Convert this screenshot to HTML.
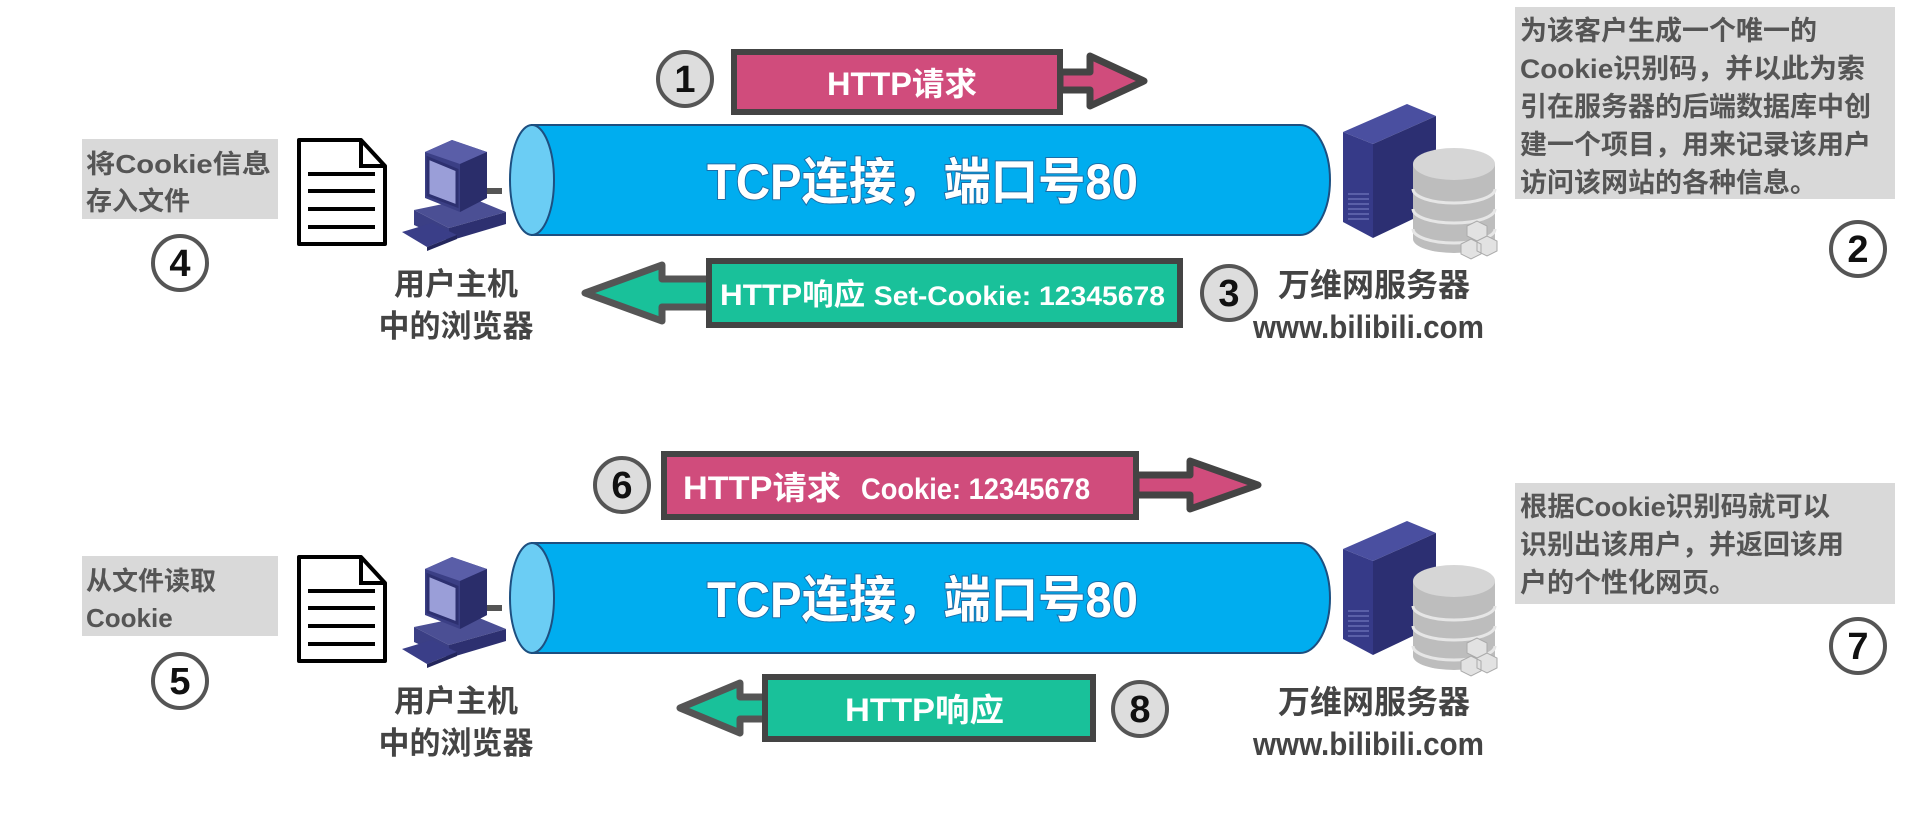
<!DOCTYPE html>
<html><head><meta charset="utf-8"><style>
html,body{margin:0;padding:0;background:#fff;}
svg{display:block}
text{font-family:"Liberation Sans","Noto Sans CJK SC",sans-serif;font-weight:bold;}
</style></head><body>
<svg width="1905" height="814" viewBox="0 0 1905 814" xmlns="http://www.w3.org/2000/svg">
<defs>
<g id="doc">
 <path d="M0 0 H62 L86 26 V104 H0 Z" fill="#fff" stroke="#000" stroke-width="4" stroke-linejoin="round"/>
 <path d="M62 0 V26 H86" fill="none" stroke="#000" stroke-width="4"/>
 <path d="M9 34H76M9 51H76M9 69H76M9 87H76" stroke="#000" stroke-width="4"/>
</g>
<g id="pc">
 <path d="M80 48 H100 V54 H80Z" fill="#555"/>
 <path d="M12 70 L70 58 L104 72 L47 88 Z" fill="#4b4f94"/>
 <path d="M47 88 L104 72 V84 L47 101 Z" fill="#2d3070"/>
 <path d="M12 70 L47 88 V101 L12 85Z" fill="#3b3f85"/>
 <path d="M0 92 L30 83 L55 95 L25 107Z" fill="#3a3e88"/>
 <path d="M25 107 L55 95 V99 L25 111Z" fill="#23265c"/>
 <path d="M23 12 L50 0 L85 12 V58 L58 72 L23 58Z" fill="#3b3f85"/>
 <path d="M23 12 L50 0 L85 12 L58 24Z" fill="#5a5ea8"/>
 <path d="M58 24 L85 12 V58 L58 72Z" fill="#2a2d6a"/>
 <path d="M26 18 L55 30 V66 L26 55Z" fill="#9a9ed8" stroke="#2d3070" stroke-width="3"/>
</g>
<g id="srv">
 <path d="M0 28 L64 0 L93 12 L30 40Z" fill="#4a4fa0"/>
 <path d="M0 28 L30 40 V134 L0 118Z" fill="#363a88"/>
 <path d="M30 40 L93 12 V104 L30 134Z" fill="#2c2f72"/>
 <path d="M5 90H26M5 95H26M5 100H26M5 105H26M5 110H26M5 115H26" stroke="#5a5fa8" stroke-width="2"/>
 <g transform="translate(70,40)">
  <path d="M0 20 V95 A41 14 0 0 0 82 95 V20Z" fill="#bdbdbd"/>
  <ellipse cx="41" cy="20" rx="41" ry="16" fill="#d6d6d6"/>
  <path d="M0 45 A41 14 0 0 0 82 45 M0 65 A41 14 0 0 0 82 65 M0 85 A41 14 0 0 0 82 85" fill="none" stroke="#e6e6e6" stroke-width="3"/>
  <path d="M54 82 l10-5 10 5v10l-10 5-10-5z M64 97 l10-5 10 5v10l-10 5-10-5z M48 100 l10-5 10 5v10l-10 5-10-5z" fill="#e2e2e2" stroke="#aaa"/>
 </g>
</g>
<g id="tube">
 <path d="M532 0 H1300 A30 55 0 0 1 1300 110 H532 Z" fill="#00adef" stroke="#1d4f80" stroke-width="2"/>
 <ellipse cx="532" cy="55" rx="22" ry="55" fill="#6bcdf4" stroke="#1d4f80" stroke-width="2"/>
 <text x="707" y="74" font-size="50" textLength="431" lengthAdjust="spacingAndGlyphs" fill="#fff" stroke="#1c6ea8" stroke-width="2" paint-order="stroke">TCP连接，端口号80</text>
</g>
</defs>

<!-- ===== TOP ===== -->
<use href="#tube" transform="translate(0,125)"/>
<rect x="82" y="139" width="196" height="80" fill="#d9d9d9"/>
<text x="86" y="173" font-size="26" fill="#555" textLength="185" lengthAdjust="spacingAndGlyphs">将Cookie信息</text>
<text x="86" y="210" font-size="26" fill="#555">存入文件</text>
<use href="#doc" transform="translate(299,140)"/>
<use href="#pc" transform="translate(402,140)"/>
<text x="456" y="295" font-size="31" fill="#444" text-anchor="middle">用户主机</text>
<text x="456" y="337" font-size="31" fill="#444" text-anchor="middle">中的浏览器</text>
<use href="#srv" transform="translate(1343,104)"/>
<text x="1374" y="296" font-size="32" fill="#444" text-anchor="middle">万维网服务器</text>
<text x="1253" y="338" font-size="32" fill="#444" textLength="231" lengthAdjust="spacingAndGlyphs" font-weight="normal">www.bilibili.com</text>
<rect x="1515" y="7" width="380" height="192" fill="#d9d9d9"/>
<g font-size="27" fill="#555">
<text x="1520" y="40">为该客户生成一个唯一的</text>
<text x="1520" y="78" textLength="345" lengthAdjust="spacingAndGlyphs">Cookie识别码，并以此为索</text>
<text x="1520" y="116">引在服务器的后端数据库中创</text>
<text x="1520" y="154">建一个项目，用来记录该用户</text>
<text x="1520" y="192">访问该网站的各种信息。</text>
</g>
<!-- request 1 -->
<path d="M1060 72 H1090 V56 L1144 81 L1090 106 V90 H1060Z" fill="#d04c7c" stroke="#444" stroke-width="7" stroke-linejoin="round"/>
<rect x="734" y="52" width="326" height="60" fill="#d04c7c" stroke="#444" stroke-width="6"/>
<text x="827" y="95" font-size="32" fill="#fff" textLength="150" lengthAdjust="spacingAndGlyphs">HTTP请求</text>
<!-- response 3 -->
<path d="M710 279 H662 V265 L585 293 L662 321 V307 H710Z" fill="#19c19a" stroke="#555" stroke-width="7" stroke-linejoin="round"/>
<rect x="709" y="261" width="471" height="64" fill="#19c19a" stroke="#444" stroke-width="6"/>
<text x="720" y="305" font-size="30" fill="#fff" textLength="445" lengthAdjust="spacingAndGlyphs">HTTP响应 <tspan font-size="27">Set-Cookie: 12345678</tspan></text>

<!-- ===== BOTTOM ===== -->
<use href="#tube" transform="translate(0,543)"/>
<rect x="82" y="556" width="196" height="80" fill="#d9d9d9"/>
<text x="86" y="590" font-size="26" fill="#555">从文件读取</text>
<text x="86" y="627" font-size="26" fill="#555">Cookie</text>
<use href="#doc" transform="translate(299,557)"/>
<use href="#pc" transform="translate(402,557)"/>
<text x="456" y="712" font-size="31" fill="#444" text-anchor="middle">用户主机</text>
<text x="456" y="754" font-size="31" fill="#444" text-anchor="middle">中的浏览器</text>
<use href="#srv" transform="translate(1343,521)"/>
<text x="1374" y="713" font-size="32" fill="#444" text-anchor="middle">万维网服务器</text>
<text x="1253" y="755" font-size="32" fill="#444" textLength="231" lengthAdjust="spacingAndGlyphs" font-weight="normal">www.bilibili.com</text>
<rect x="1515" y="483" width="380" height="121" fill="#d9d9d9"/>
<g font-size="27" fill="#555">
<text x="1520" y="516" textLength="310" lengthAdjust="spacingAndGlyphs">根据Cookie识别码就可以</text>
<text x="1520" y="554">识别出该用户，并返回该用</text>
<text x="1520" y="592">户的个性化网页。</text>
</g>
<!-- request 6 -->
<path d="M1136 475 H1190 V461 L1258 485 L1190 509 V495 H1136Z" fill="#d04c7c" stroke="#444" stroke-width="7" stroke-linejoin="round"/>
<rect x="664" y="454" width="472" height="63" fill="#d04c7c" stroke="#444" stroke-width="6"/>
<text x="683" y="499" font-size="32" fill="#fff" textLength="158" lengthAdjust="spacingAndGlyphs">HTTP请求</text>
<text x="861" y="499" font-size="30" fill="#fff" textLength="229" lengthAdjust="spacingAndGlyphs">Cookie: 12345678</text>
<!-- response 8 -->
<path d="M766 697 H740 V683 L680 708 L740 733 V719 H766Z" fill="#19c19a" stroke="#555" stroke-width="7" stroke-linejoin="round"/>
<rect x="765" y="677" width="328" height="62" fill="#19c19a" stroke="#444" stroke-width="6"/>
<text x="845" y="721" font-size="32" fill="#fff" textLength="159" lengthAdjust="spacingAndGlyphs">HTTP响应</text>

<!-- circles -->
<g font-size="38" fill="#111" text-anchor="middle">
<g><circle cx="685" cy="79" r="27" fill="#ddd" stroke="#555" stroke-width="4"/><text x="685" y="92">1</text></g>
<g><circle cx="1858" cy="249" r="27" fill="#fff" stroke="#555" stroke-width="4"/><text x="1858" y="262">2</text></g>
<g><circle cx="1229" cy="293" r="27" fill="#ddd" stroke="#555" stroke-width="4"/><text x="1229" y="306">3</text></g>
<g><circle cx="180" cy="263" r="27" fill="#fff" stroke="#555" stroke-width="4"/><text x="180" y="276">4</text></g>
<g><circle cx="180" cy="681" r="27" fill="#fff" stroke="#555" stroke-width="4"/><text x="180" y="694">5</text></g>
<g><circle cx="622" cy="485" r="27" fill="#ddd" stroke="#555" stroke-width="4"/><text x="622" y="498">6</text></g>
<g><circle cx="1858" cy="646" r="27" fill="#fff" stroke="#555" stroke-width="4"/><text x="1858" y="659">7</text></g>
<g><circle cx="1140" cy="709" r="27" fill="#ddd" stroke="#555" stroke-width="4"/><text x="1140" y="722">8</text></g>
</g>
</svg>
</body></html>
